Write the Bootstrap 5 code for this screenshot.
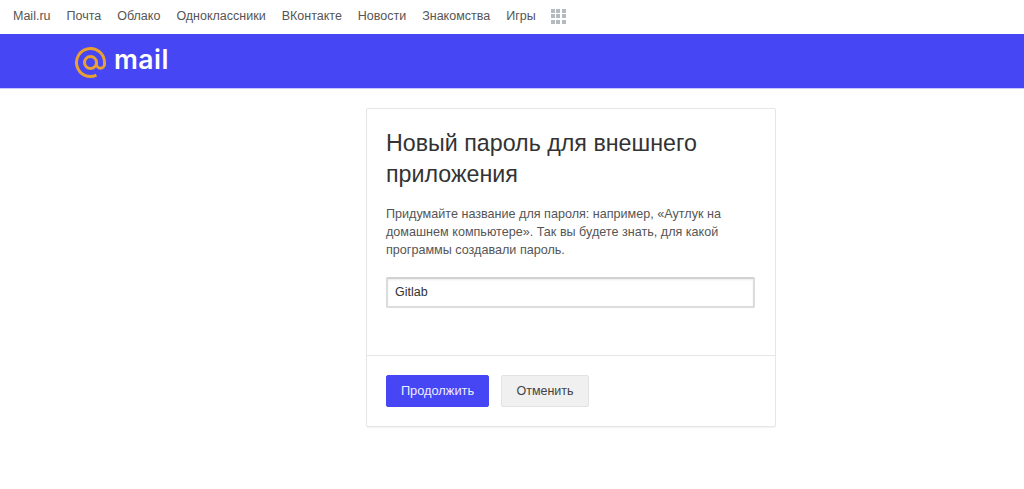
<!doctype html>
<html lang="ru">
<head>
<meta charset="utf-8">
<title>Mail</title>
<link href="https://cdn.jsdelivr.net/npm/bootstrap@5.3.0/dist/css/bootstrap.min.css" rel="stylesheet">
<style>
html,body{height:489px;overflow:hidden}
body{font-family:"Liberation Sans",Arial,sans-serif;background:#fff;color:#333}
.topbar{height:34px;padding:0 0 2px 13px;gap:16px;font-size:12.5px}
.topbar a{color:#555;text-decoration:none}
.apps{display:grid;grid-template-columns:repeat(3,4px);grid-auto-rows:4px;gap:1.5px;margin-left:-1px}
.apps i{background:#b4babd;display:block}
.brandbar{height:55px;background:#4646f5;padding-left:74px;gap:7px;border-bottom:1px solid #c8c8fb}
.brandmark{margin-top:3px}
.brandname{font-family:Inter,sans-serif;font-weight:600;font-size:26.5px;letter-spacing:.5px;line-height:1;color:#fff;margin-top:-4px}
.pwcard{width:410px;margin:19px 0 0 366px;height:319px;border:1px solid #e6e6e6;border-radius:2px;box-shadow:0 1px 1px rgba(0,0,0,.05)}
.pwbody{padding:19px 19px 0;height:246px}
.pwtitle{font-size:23.25px;line-height:31px;font-weight:400;color:#333;margin:0 0 15px}
.pwtext{font-size:12.6px;line-height:18px;color:#555;margin:0 0 18px}
.pwinput{width:369px;height:31px;font-size:12.5px;color:#333;padding:0 7px 2px;border:2px solid #dcdcdc;border-top-color:#d2d2d2;border-radius:2px;box-shadow:inset 0 1px 2px rgba(0,0,0,.08)}
.pwfoot{border-top:1px solid #e6e6e6;padding:19px 19px 0;gap:12px}
.btn.gonext{width:103px;height:32px;padding:0;font-size:12.8px;background:#4646f5;border-color:#4646f5;color:#eef;border-radius:2px}
.btn.stopit{width:88px;height:32px;padding:0;font-size:12.5px;background:#f0f0f0;border:1px solid #e2e2e2;color:#444;border-radius:2px}
</style>
</head>
<body>
<nav class="topbar d-flex align-items-center">
<a href="#">Mail.ru</a><a href="#">Почта</a><a href="#">Облако</a><a href="#">Одноклассники</a><a href="#">ВКонтакте</a><a href="#">Новости</a><a href="#">Знакомства</a><a href="#">Игры</a>
<span class="apps"><i></i><i></i><i></i><i></i><i></i><i></i><i></i><i></i><i></i></span>
</nav>
<header class="brandbar d-flex align-items-center">
<svg class="brandmark" width="33" height="33" viewBox="0 0 33 33" fill="none" stroke="#e8a033" stroke-width="3"><path d="M22.5 16.500a6 6 0 1 1-12 0 6 6 0 0 1 12 0v1.700a4 4 0 0 0 8 0v-1.700A14 14 0 1 0 22.400 29.200"/></svg>
<span class="brandname">mail</span>
</header>
<main class="pwcard card">
<div class="pwbody">
<h1 class="pwtitle">Новый пароль для внешнего приложения</h1>
<p class="pwtext">Придумайте название для пароля: например, «Аутлук на домашнем компьютере». Так вы будете знать, для какой программы создавали пароль.</p>
<input class="pwinput form-control" type="text" value="Gitlab">
</div>
<div class="pwfoot d-flex">
<button class="btn gonext" type="button">Продолжить</button>
<button class="btn stopit" type="button">Отменить</button>
</div>
</main>
<script src="https://cdn.jsdelivr.net/npm/bootstrap@5.3.0/dist/js/bootstrap.bundle.min.js"></script>
</body>
</html>
